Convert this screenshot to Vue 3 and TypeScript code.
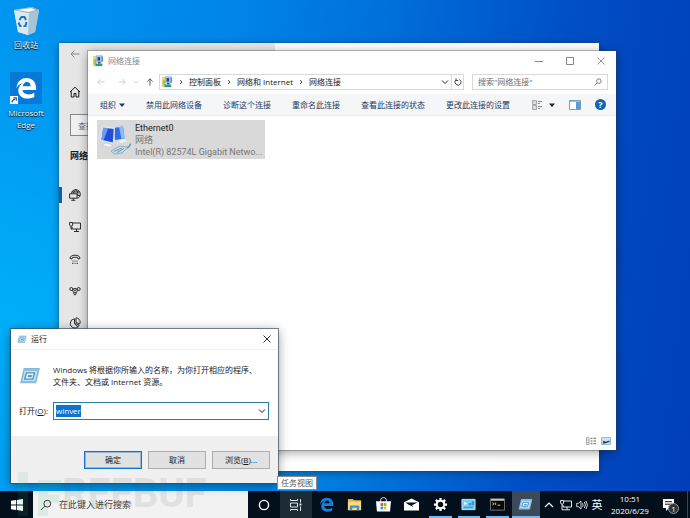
<script setup lang="ts">
import { onMounted, ref } from 'vue'

interface Command {
  label: string
  menu?: boolean
}

interface TaskApp {
  name: string
  icon: string
  running?: boolean
  active?: boolean
}

const commands: Command[] = [
  { label: '组织', menu: true },
  { label: '禁用此网络设备' },
  { label: '诊断这个连接' },
  { label: '重命名此连接' },
  { label: '查看此连接的状态' },
  { label: '更改此连接的设置' },
]

const crumbs: string[] = ['控制面板', '网络和 Internet', '网络连接']

const settingsPages: { name: string; icon: string }[] = [
  { name: '状态', icon: 'globe' },
  { name: '以太网', icon: 'ethernet' },
  { name: '拨号', icon: 'dialup' },
  { name: 'VPN', icon: 'vpn' },
  { name: '数据使用量', icon: 'usage' },
]

const apps: TaskApp[] = [
  { name: 'Microsoft Edge', icon: 'edge' },
  { name: '文件资源管理器', icon: 'folder' },
  { name: 'Microsoft Store', icon: 'store' },
  { name: '邮件', icon: 'mail' },
  { name: '设置', icon: 'gear', running: true },
  { name: '网络连接', icon: 'panel', running: true },
  { name: '命令提示符', icon: 'console', running: true },
  { name: '运行', icon: 'run', running: true, active: true },
]

const command = ref('winver')
const commandBox = ref<HTMLInputElement | null>(null)

onMounted(() => {
  commandBox.value?.focus()
  commandBox.value?.select()
})
</script>

<template>
  <svg class="defs" aria-hidden="true">
    <symbol id="i-run" viewBox="0 0 24 20">
      <path d="M5 1h18l-4 17H1z" fill="#8fc3e2" />
      <path d="M6 2h15.500l-3.500 14.500H2.500z" fill="#c4e2f3" stroke="#6ba6cb" stroke-width=".8" />
      <path d="M6 2h15.500l-.6 2.500H5.400z" fill="#8dbfdf" />
      <path d="M8 6.500h9l-1.800 7H6.200z" fill="#eef8fd" stroke="#4f93c2" stroke-width="1.600" />
      <path d="M10 9h4.500l-.6 2.400H9.400z" fill="#5d9cc4" />
    </symbol>
    <symbol id="i-net" viewBox="0 0 14 14">
      <path d="M1 1h4v12H1z" fill="#f0dc70" />
      <path d="M2 5h3v6H2z" fill="#9cc56a" />
      <path d="M5 1h7v7H5z" fill="#b9d3ee" stroke="#7f97b3" stroke-width=".8" />
      <path d="M6.500 2.500h3v4h-3z" fill="#173f9c" />
      <path d="M11 2h2v5l-2 1z" fill="#5e8fd0" />
      <path d="M7 8h3v2H7z" fill="#3a5475" />
      <path d="M4 10h8v3H4z" fill="#2c9d78" />
    </symbol>
    <symbol id="i-edge" viewBox="0 0 24 24">
      <path d="M1.500 12C2.500 4.500 7 1 12.500 1 19 1 23 5.600 23 12v2.300H8.200c.3 3.200 3 4.700 6.300 4.700 2.600 0 4.700-.7 6.500-1.800v4.700C19 23 16.500 23.500 13.500 23.500 7.500 23.500 3.600 20 3.600 14.700c0-3.500 1.900-6.400 5-8C5.500 7.200 3 9 1.500 12zM8.500 10h8.600c0-2.700-1.400-4.500-4-4.500-2.500 0-4.200 1.800-4.600 4.500z" />
    </symbol>
    <symbol id="i-search" viewBox="0 0 12 12">
      <circle cx="7.300" cy="4.700" r="3.400" fill="none" stroke="currentColor" />
      <path d="M4.800 7.200 1 11" stroke="currentColor" fill="none" />
    </symbol>
    <symbol id="i-back" viewBox="0 0 10 10">
      <path d="M9.500 5H1M4.500 1.500 1 5l3.500 3.500" fill="none" stroke="currentColor" />
    </symbol>
    <symbol id="i-down" viewBox="0 0 8 8">
      <path d="M1 2.500 4 5.500l3-3" fill="none" stroke="currentColor" />
    </symbol>
    <symbol id="i-close" viewBox="0 0 8 8">
      <path d="m.5.5 7 7m0-7-7 7" fill="none" stroke="currentColor" stroke-width=".9" />
    </symbol>
  </svg>

  <main class="desktop">
    <div class="shortcuts">
      <a class="shortcut" href="#recycle">
        <svg class="bin" viewBox="0 0 28 30">
          <path d="M2 4 20 1l7 3-4 22-7 3-10-3z" fill="#cfe0ea" />
          <path d="m2 4 15 3-1 22-10-3z" fill="#dbe8f0" />
          <path d="m17 7 10-3-4 22-7 3z" fill="#a9c3d3" />
          <path d="M2 4 20 1l7 3-10 3z" fill="#8ca6b5" />
          <path d="m5 4 14-2 5 2-7 2z" fill="#f4f8fa" />
          <path d="m7.500 14 2-3h3l1.500 3M14.500 16l-1 4h-2M9.500 20H8l-1.500-3.500" fill="none" stroke="#1c78c0" stroke-width="2" />
        </svg>
        <span>回收站</span>
      </a>
      <a class="shortcut" href="#edge">
        <span class="tile">
          <svg class="tile-logo"><use href="#i-edge" /></svg>
          <svg class="arrow" viewBox="0 0 8 8">
            <path d="M0 0h8v8H0z" fill="#fff" />
            <path d="M2 6.500C2 4.500 3 3.500 5 3.300M3.300 1.800h3v3" fill="none" stroke="#1b5fa8" stroke-width="1.200" />
          </svg>
        </span>
        <span>Microsoft<br />Edge</span>
      </a>
    </div>

    <section class="settings" aria-label="设置">
      <nav class="side">
        <button class="side-back" aria-label="返回"><svg class="s10"><use href="#i-back" /></svg></button>
        <button class="side-home" aria-label="主页">
          <svg class="s12" viewBox="0 0 12 12"><path d="M1 6 6 1.200 11 6M2.200 5v6H5V7.500h2V11h2.800V5" fill="none" stroke="currentColor" /></svg>
        </button>
        <input class="side-find" type="text" placeholder="查找设置" aria-label="查找设置" />
        <h2>网络和 Internet</h2>
        <button v-for="(page, i) in settingsPages" :key="page.icon" class="side-item" :class="{ on: i === 0 }" :aria-label="page.name">
          <svg class="s12" viewBox="0 0 12 12" fill="none" stroke="currentColor" stroke-width=".9">
            <template v-if="page.icon === 'globe'">
              <path d="M2.500 4.500C2.500 2.300 4.500.7 6.800.7c2.500 0 4.500 2 4.500 4.500 0 2-1.200 3.600-3 4.200M6.800.7C5.300 1.800 4.800 3 4.800 4.500M6.800.7c1.600 1.300 2.200 2.900 2 5.500M3 3h7.600M8.500 6.500h2.600" />
              <path d="M.6 4.800h7.400v4.400H.6zM4.300 9.200v2M2.300 11.300h4" />
            </template>
            <template v-else-if="page.icon === 'ethernet'">
              <path d="M4 2h7.500v6H3V5.500M7.500 8v2.500M5 10.500h5M.6 1.500h3v2.500l-1 1.200h-1l-1-1.200zM2 5.200V8h1" />
            </template>
            <template v-else-if="page.icon === 'dialup'">
              <path d="M1 5.500C1 3.300 3 2.200 6 2.200s5 1.100 5 3.300L9 6 8.300 4.300H3.700L3 6zM3.500 8h1m1 0h1m1 0h1M3 10.300h1.500m1 0h1m1 0H9" />
            </template>
            <template v-else-if="page.icon === 'vpn'">
              <circle cx="2.300" cy="4" r="1.500" /><circle cx="9.700" cy="4" r="1.500" /><circle cx="6" cy="4.600" r="1.200" />
              <path d="M3.200 5.200 5 8m3.800-2.800L7 8M3.800 4h1m2.400 0h1" /><circle cx="6" cy="8.700" r="1.200" />
            </template>
            <template v-else>
              <path d="M5.500 1.800A4.600 4.600 0 1 0 10.200 8L5.500 6.500zM7 .8c2.500.2 4.200 2 4.200 4.500 0 .6-.1 1-.3 1.500L7 5.500zM5.500 6.500 9 10.200" />
            </template>
          </svg>
        </button>
      </nav>
    </section>

    <section class="explorer" aria-label="网络连接">
      <header class="titlebar">
        <svg class="s12"><use href="#i-net" /></svg>
        <span class="title">网络连接</span>
        <button class="win-btn" aria-label="最小化"><svg class="s8" viewBox="0 0 8 8"><path d="M0 4.500h8" stroke="currentColor" /></svg></button>
        <button class="win-btn" aria-label="最大化"><svg class="s8" viewBox="0 0 8 8"><path d="M.5.5h7v7h-7z" fill="none" stroke="currentColor" /></svg></button>
        <button class="win-btn" aria-label="关闭"><svg class="s8"><use href="#i-close" /></svg></button>
      </header>

      <div class="navrow">
        <button class="nav-btn dim" aria-label="后退"><svg class="s8"><use href="#i-back" /></svg></button>
        <button class="nav-btn dim" aria-label="前进"><svg class="s8 flip"><use href="#i-back" /></svg></button>
        <button class="nav-more dim" aria-label="最近位置"><svg class="s6"><use href="#i-down" /></svg></button>
        <button class="nav-btn up" aria-label="上移"><svg class="s8 turn"><use href="#i-back" /></svg></button>
        <nav class="address">
          <svg class="s12"><use href="#i-net" /></svg>
          <template v-for="crumb in crumbs" :key="crumb">
            <svg class="sep" viewBox="0 0 6 6"><path d="m2 1 2 2-2 2" fill="none" stroke="#444" /></svg>
            <a href="#path">{{ crumb }}</a>
          </template>
          <button class="drop" aria-label="以前的位置"><svg class="s8"><use href="#i-down" /></svg></button>
          <button class="refresh" aria-label="刷新">
            <svg class="s8" viewBox="0 0 8 8"><path d="M5.500 1.500A3 3 0 1 1 2 1.900M2 .3v2.200h2.200" fill="none" stroke="#444" /></svg>
          </button>
        </nav>
        <label class="find">
          <input type="text" placeholder="搜索&quot;网络连接&quot;" aria-label="搜索网络连接" />
          <svg class="s8"><use href="#i-search" /></svg>
        </label>
      </div>

      <div class="commands">
        <button v-for="c in commands" :key="c.label" class="cmd">
          {{ c.label }}<svg v-if="c.menu" class="tri" viewBox="0 0 6 4"><path d="M0 .5h6L3 4z" fill="#1d3a63" /></svg>
        </button>
        <span class="tools">
          <button class="cmd" aria-label="更改视图">
            <svg class="s10" viewBox="0 0 10 10">
              <path d="M.5.5h4v4h-4zM.5 5.500h4v4h-4z" fill="#dcdcdc" stroke="#a6a6a6" />
              <path d="M6 1.500h4M6 3.500h2M6 6.500h4M6 8.500h2" stroke="#7d8791" />
            </svg>
          </button>
          <button class="cmd" aria-label="更多视图"><svg class="tri" viewBox="0 0 6 4"><path d="M0 .5h6L3 4z" fill="#222" /></svg></button>
          <button class="cmd pane" aria-label="预览窗格">
            <svg class="s11" viewBox="0 0 12 10"><path d="M.5.5h11v9H.5z" fill="#fff" stroke="#7a9cba" /><path d="M7 1h4v8H7z" fill="#5b9bd8" /><path d="M1 1.500h10" stroke="#a9bfd3" /></svg>
          </button>
          <button class="help" aria-label="帮助">?</button>
        </span>
      </div>

      <div class="files">
        <article class="adapter">
          <svg class="adapter-icon" viewBox="0 0 32 34">
            <path d="m14 4 11-2 2 15-11 2z" fill="#c9d8e8" />
            <path d="m15 5 9-1.500 1.500 12L16 17z" fill="#2d6fe0" />
            <path d="m20 4 4-.6 1.500 12-3 .5z" fill="#8fb8f5" />
            <path d="m3 3 13 1.500-1 17L1 18z" fill="#dbe5ef" />
            <path d="m4.200 4.700 10.500 1.200-.9 13.500L2.500 16.800z" fill="#1f4fd6" />
            <path d="m4.200 4.700 5 .6L4.500 17.300l-2-.5z" fill="#6b9cf3" />
            <path d="m6 20-3 2.500 8 2 3-2-4-2z" fill="#eef2f5" stroke="#b6c0c9" stroke-width=".6" />
            <path d="m19 18 3 2 6-2-3-2z" fill="#eef2f5" />
            <path d="m12 28 9-5 8 1-6 6-8 1z" fill="#c3dae7" stroke="#7fa5bb" stroke-width=".8" />
            <path d="m15 28.500 8-3.500M18 29.500l7-4" stroke="#5f89a4" stroke-width=".8" />
            <path d="M28 25c3-.5 2-3 4-4" fill="none" stroke="#5b93b8" stroke-width="1.400" />
          </svg>
          <div class="adapter-text">
            <strong>Ethernet0</strong>
            <span>网络</span>
            <span>Intel(R) 82574L Gigabit Netwo...</span>
          </div>
        </article>
      </div>

      <footer class="status">
        <button class="cmd" aria-label="详细信息">
          <svg class="s10" viewBox="0 0 10 8"><path d="M.5.5h2.500v7H.5zM.5 3h2.500M.5 5.500h2.500" fill="none" stroke="#8a8a8a" stroke-width=".7" /><path d="M4.500 1.300h2m1 0h2.500M4.500 4h2m1 0h2.500M4.500 6.700h2m1 0h2.500" stroke="#666" /></svg>
        </button>
        <button class="cmd" aria-label="大图标">
          <svg class="s10" viewBox="0 0 10 8"><path d="M.5.5h9v7h-9z" fill="#cfe3f0" stroke="#9cbacd" /><path d="m1.500 6.500 1-3 2 1.200L8.500 3.500v1.500L4 6.500z" fill="#24465c" /></svg>
        </button>
      </footer>
    </section>

    <form class="run" aria-label="运行" @submit.prevent>
      <header class="run-title">
        <svg class="run-small"><use href="#i-run" /></svg>
        <span class="title">运行</span>
        <button type="button" class="run-close" aria-label="关闭"><svg class="s8"><use href="#i-close" /></svg></button>
      </header>
      <div class="run-body">
        <svg class="run-large"><use href="#i-run" /></svg>
        <p>Windows 将根据你所输入的名称，为你打开相应的程序、文件夹、文档或 Internet 资源。</p>
        <label for="cmd">打开(<u>O</u>):</label>
        <div class="combo">
          <input id="cmd" ref="commandBox" v-model="command" type="text" spellcheck="false" autocomplete="off" />
          <button type="button" aria-label="历史记录"><svg class="s8"><use href="#i-down" /></svg></button>
        </div>
      </div>
      <footer class="run-foot">
        <button type="submit" class="primary">确定</button>
        <button type="button">取消</button>
        <button type="button">浏览(<u>B</u>)...</button>
      </footer>
    </form>

    <div class="tooltip" role="tooltip">任务视图</div>

    <footer class="taskbar">
      <button class="start" aria-label="开始">
        <svg class="s12" viewBox="0 0 12 12"><path d="M0 1.700 5 1v4.600H0zM5.800.9 12 0v5.600H5.800zM0 6.400h5V11l-5-.7zM5.800 6.400H12V12l-6.200-.9z" fill="#fff" /></svg>
      </button>
      <label class="search">
        <svg class="s12"><use href="#i-search" /></svg>
        <input type="text" placeholder="在此键入进行搜索" aria-label="在此键入进行搜索" />
      </label>
      <button class="task" aria-label="Cortana"><svg class="s12" viewBox="0 0 12 12"><circle cx="6" cy="6" r="4.600" fill="none" stroke="#fff" stroke-width="1.400" /></svg></button>
      <button class="task hover" aria-label="任务视图">
        <svg class="s12" viewBox="0 0 12 12"><path d="M.5 0v1.500h7V0M.5 4h7v4h-7zM.5 12v-1.500h7V12M10.500 0v3.500M10.500 7.500V12" fill="none" stroke="#dfe6e8" /><path d="M9.500 4.500h2v2h-2z" fill="#dfe6e8" /></svg>
      </button>
      <div class="apps">
        <button v-for="app in apps" :key="app.icon" class="app" :class="{ running: app.running, active: app.active }" :aria-label="app.name">
          <svg v-if="app.icon === 'edge'" class="app-icon blue"><use href="#i-edge" /></svg>
          <svg v-else-if="app.icon === 'run'" class="app-icon"><use href="#i-run" /></svg>
          <svg v-else class="app-icon" viewBox="0 0 16 16">
            <template v-if="app.icon === 'folder'">
              <path d="M1 2h5l1.500 1.500H15V14H1z" fill="#e9b93f" /><path d="M1 5h14v9H1z" fill="#fbdc7c" />
              <path d="M3 9h10v5h-2.500v-2.500h-5V14H3z" fill="#3d93d6" />
            </template>
            <template v-else-if="app.icon === 'store'">
              <path d="M5 5V3.500C5 1.500 6.200.7 8 .7s3 .8 3 2.800V5" fill="none" stroke="#fff" /><path d="M0 4.500h16l-1 11H1z" fill="#fff" />
              <path d="M4.800 6.500h2.800v3H4.800z" fill="#e8502a" /><path d="M8.300 6.500h2.800v3H8.300z" fill="#7dba2c" /><path d="M4.800 10.200h2.800v3H4.800z" fill="#2b9de0" /><path d="M8.300 10.200h2.800v3H8.300z" fill="#f6b824" />
            </template>
            <template v-else-if="app.icon === 'mail'">
              <path d="M0 5.500 8 1.500l8 4v9H0z" fill="#fff" /><path d="M1.500 5.800h13L8.500 8.700 10.500 11 4.500 8z" fill="#04121c" />
            </template>
            <template v-else-if="app.icon === 'gear'">
              <circle cx="8" cy="8" r="4" fill="none" stroke="#fff" stroke-width="2.200" />
              <path d="M8 1v2.500M8 12.500V15M1 8h2.500M12.500 8H15M3.050 3.050l1.800 1.800M11.150 11.150l1.800 1.800M3.050 12.950l1.800-1.800M11.150 4.850l1.800-1.800" stroke="#fff" stroke-width="2.400" />
            </template>
            <template v-else-if="app.icon === 'panel'">
              <path d="M1 2.500h14v11H1z" fill="#78cdf3" stroke="#b9e6fa" /><path d="m3 5 4 2-2 .5-1 1.500z" fill="#fff" /><path d="M9 9V7h1.500v2M12 9V5h1.500v4M3 11h10" fill="none" stroke="#1477b8" stroke-width=".8" />
            </template>
            <template v-else>
              <path d="M.5 2h15v12H.5z" fill="#080808" stroke="#777" /><path d="M1 2h14v2H1z" fill="#c6c6c6" /><path d="m2.500 6 2 1.300-2 1.300M6 6v2.500M8 8.700h3" fill="none" stroke="#ddd" stroke-width=".9" />
            </template>
          </svg>
        </button>
      </div>
      <div class="tray">
        <button aria-label="显示隐藏的图标"><svg class="s10" viewBox="0 0 10 10"><path d="m1 7 4-4 4 4" fill="none" stroke="#fff" stroke-width="1.200" /></svg></button>
        <button aria-label="网络">
          <svg class="s12" viewBox="0 0 12 12"><path d="M4 2h7.500v6H3V6M7 8v2.500M4.500 10.800H10M.6 1.500h3v2.500l-1 1.200h-1l-1-1.200zM2 5.200v5.600h2.500" fill="none" stroke="#fff" stroke-width=".9" /></svg>
        </button>
        <button aria-label="音量">
          <svg class="s12" viewBox="0 0 12 12"><path d="M.7 4.300h1.800L5 2v8L2.500 7.700H.7z M6.500 4.200q1.300 1.800 0 3.600M8.300 3q2.200 3 0 6M10 2q2.800 4 0 8" fill="none" stroke="#fff" stroke-width=".8" /></svg>
        </button>
        <button class="ime">英</button>
        <button class="clock"><time>10:51</time><time>2020/6/29</time></button>
        <button class="notice" aria-label="通知">
          <svg viewBox="0 0 14 14"><path d="M1 1h11v9H7l-3 3v-3H1z" fill="#fff" /><path d="M3 3.700h7M3 6.200h7" stroke="#04121c" /></svg>
          <span class="badge">1</span>
        </button>
      </div>
    </footer>

    <div class="mark" aria-hidden="true">
      <svg viewBox="0 0 44 44"><path d="M0 0h10v44H0zM20 8h23v8H30v7h11v8H30v13H20z" fill="#35b779" /></svg>
      <span>REEBUF</span>
    </div>
  </main>
</template>

<style>
body {
  margin: 0;
  overflow: hidden;
}
</style>

<style scoped>
.defs {
  position: absolute;
  width: 0;
  height: 0;
}

.desktop {
  position: relative;
  height: 100vh;
  overflow: hidden;
  display: flex;
  flex-direction: column;
  justify-content: space-between;
  font: 8px/12px "Open Sans", "Noto Sans CJK SC", sans-serif;
  color: #1a1a1a;
  background:
    radial-gradient(ellipse at 0 62%, rgba(0, 184, 255, 0.75), rgba(0, 150, 245, 0) 65%),
    linear-gradient(97deg, #0096f0 0%, #0086e8 30%, #006fda 52%, #004fc6 76%, #003eb8 100%);
}

button,
input {
  font: inherit;
  color: inherit;
  margin: 0;
  padding: 0;
  border: 0;
  background: none;
  outline: none;
  min-width: 0;
}

button {
  display: flex;
  align-items: center;
  justify-content: center;
}

a {
  color: inherit;
  text-decoration: none;
}

svg {
  display: block;
  flex: none;
}

.s6 { width: 6px; height: 6px; }
.s8 { width: 8px; height: 8px; }
.s10 { width: 10px; height: 10px; }
.s11 { width: 12px; height: 10px; }
.s12 { width: 12px; height: 12px; }
.flip { transform: scaleX(-1); }
.turn { transform: rotate(90deg); }

/* Desktop shortcuts */
.shortcuts {
  display: flex;
  flex-direction: column;
  align-items: flex-start;
  gap: 21px;
  padding-top: 6px;
}

.shortcut {
  display: flex;
  flex-direction: column;
  align-items: center;
  width: 52px;
  gap: 3px;
  color: #fff;
  text-align: center;
  text-shadow: 0 1px 1px #000, 0 0 2px #002a50;
}

.bin {
  width: 28px;
  height: 30px;
}

.tile {
  position: relative;
  display: flex;
  align-items: center;
  justify-content: center;
  width: 32px;
  height: 32px;
  background: #0878d8;
}

.tile-logo {
  width: 22px;
  height: 22px;
  fill: #fff;
}

.arrow {
  position: absolute;
  left: 0;
  bottom: 0;
  width: 8px;
  height: 8px;
}

/* Settings window */
.settings {
  position: absolute;
  left: 59px;
  top: 43px;
  width: 540px;
  height: 428px;
  background: #fff;
  box-shadow: 0 0 0 1px rgba(40, 60, 80, 0.2), 0 2px 8px rgba(0, 0, 0, 0.35);
}

.side {
  display: flex;
  flex-direction: column;
  align-items: flex-start;
  width: 40%;
  height: 100%;
  background: #e6e6e6;
}

.side button {
  height: 32px;
  padding-left: 10px;
}

.side .side-back {
  height: 22px;
  padding-left: 11px;
  color: #888;
}

.side .side-home {
  height: 49px;
  padding-top: 5px;
}

.side-find {
  width: 190px;
  height: 20px;
  margin-left: 11px;
  padding-left: 7px;
  border: 1px solid #888;
  background: #f0f0f0;
}

.side h2 {
  margin: 14px 0 25px 11px;
  font-size: 9px;
  line-height: 12px;
}

.side .side-item {
  border-left: 3px solid transparent;
  padding-left: 7px;
  height: 16px;
  margin-bottom: 16px;
}

.side .side-item.on {
  border-left-color: #0a63b0;
}

/* Network connections window */
.explorer {
  position: absolute;
  left: 88px;
  top: 51px;
  width: 528px;
  height: 399px;
  display: flex;
  flex-direction: column;
  background: #fff;
  box-shadow: 0 0 0 1px rgba(60, 60, 60, 0.3), 0 2px 10px rgba(0, 0, 0, 0.4);
}

.titlebar {
  display: flex;
  align-items: center;
  height: 19px;
  padding-left: 4px;
  color: #888;
}

.title {
  flex: 1;
  padding-left: 4px;
}

.win-btn {
  width: 31px;
  height: 19px;
}

.navrow {
  display: flex;
  align-items: center;
  height: 24px;
  padding: 0 8px 0 2px;
  color: #333;
}

.nav-btn {
  width: 21px;
  height: 16px;
}

.nav-btn.up {
  width: 19px;
}

.nav-more {
  width: 8px;
}

.navrow .dim {
  color: #c4c4c4;
}

.address,
.find {
  display: flex;
  align-items: center;
  box-sizing: border-box;
  height: 16px;
  border: 1px solid #d9d9d9;
}

.address {
  flex: 1;
  padding-left: 1px;
  color: #222;
}

.sep {
  width: 6px;
  height: 6px;
  margin: 0 5px;
}

.drop {
  margin-left: auto;
  width: 12px;
  height: 14px;
}

.refresh {
  width: 12px;
  height: 14px;
  border-left: 1px solid #d9d9d9;
}

.find {
  width: 136px;
  margin-left: 8px;
  padding: 0 5px;
  color: #444;
}

.find input {
  flex: 1;
}

input::placeholder {
  color: #6d6d6d;
  opacity: 1;
}

.commands {
  display: flex;
  align-items: center;
  gap: 21px;
  height: 21px;
  padding: 0 10px 0 12px;
  background: #f5f6f7;
  border-bottom: 1px solid #ececee;
  color: #1d3a63;
}

.cmd {
  white-space: nowrap;
}

.tri {
  width: 6px;
  height: 4px;
  margin-left: 3px;
}

.tools {
  display: flex;
  align-items: center;
  margin-left: auto;
  gap: 4px;
}

.tools .pane {
  margin: 0 10px;
}

.help {
  width: 11px;
  height: 11px;
  border-radius: 50%;
  background: #0f63b0;
  color: #fff;
  font-size: 9px;
  font-weight: 700;
}

.files {
  flex: 1;
  padding: 4px 9px;
}

.adapter {
  display: flex;
  align-items: center;
  gap: 4px;
  width: 168px;
  height: 39px;
  box-sizing: border-box;
  padding-left: 2px;
  background: #d9d9d9;
}

.adapter-icon {
  width: 32px;
  height: 34px;
}

.adapter-text {
  display: flex;
  flex-direction: column;
  color: #777;
  font-family: Roboto, "Noto Sans CJK SC", sans-serif;
  font-size: 9px;
  white-space: nowrap;
}

.adapter-text strong {
  color: #1a1a1a;
  font-weight: 400;
}

.status {
  display: flex;
  justify-content: flex-end;
  gap: 5px;
  padding: 0 5px 4px;
}

/* Run dialog */
.run {
  position: absolute;
  left: 11px;
  top: 329px;
  width: 267px;
  height: 154px;
  display: flex;
  flex-direction: column;
  background: #fff;
  box-shadow: 0 0 0 1px rgba(60, 70, 80, 0.65), 0 2px 10px rgba(0, 0, 0, 0.45);
}

.run-title {
  display: flex;
  align-items: center;
  height: 20px;
  padding-left: 6px;
  border-bottom: 1px solid #f1f1f1;
}

.run-small {
  width: 10px;
  height: 9px;
}

.run-close {
  width: 22px;
  height: 20px;
}

.run-body {
  flex: 1;
  display: grid;
  grid-template-columns: 30px 1fr;
  align-content: start;
  align-items: center;
  column-gap: 4px;
  row-gap: 14px;
  padding: 14px 9px 0 8px;
}

.run-body label {
  white-space: nowrap;
}

.run-body p {
  margin: 0;
  padding-right: 6px;
}

.run-large {
  width: 22px;
  height: 18px;
}

.combo {
  display: flex;
  align-items: center;
  box-sizing: border-box;
  height: 18px;
  padding-left: 2px;
  border: 1px solid #2d7d9a;
}

.combo input {
  flex: 1;
}

.combo input::selection {
  background: #0a74d0;
  color: #fff;
}

.combo button {
  width: 13px;
}

.run-foot {
  display: flex;
  justify-content: flex-end;
  gap: 6px;
  padding: 15px 8px 14px;
  background: #f0f0f0;
}

.run-foot button {
  box-sizing: border-box;
  width: 58px;
  height: 18px;
  border: 1px solid #adadad;
  background: #e1e1e1;
}

.run-foot .primary {
  border: 1px solid #0a74d0;
  box-shadow: inset 0 0 0 1px rgba(10, 116, 208, 0.35);
}

.tooltip {
  position: absolute;
  left: 277px;
  bottom: 28px;
  padding: 0 3px;
  border: 1px solid #8a8a8a;
  background: #fff;
  color: #555;
}

/* Taskbar */
.taskbar {
  display: flex;
  height: 27px;
  background: #03101c;
  color: #fff;
}

.taskbar button {
  height: 27px;
}

.start {
  width: 33px;
}

.search {
  display: flex;
  align-items: center;
  gap: 7px;
  width: 208px;
  padding-left: 7px;
  background: #f2f2f2;
  color: #333;
  font-size: 9px;
}

.search input {
  flex: 1;
}

.search input::placeholder {
  color: #444;
}

.task {
  width: 32px;
}

.hover {
  background: #1d2b35;
}

.apps {
  flex: 1;
  display: grid;
  grid-template-columns: repeat(8, 1fr);
}

.app-icon {
  width: 15px;
  height: 15px;
}

.blue {
  fill: #1481e0;
}

.app.running {
  margin: 0 3px;
  box-shadow: inset 0 -2px #76b9ed;
}

.app.active {
  margin: 0;
  background: #3a4a58;
}

.tray {
  display: grid;
  grid-template-columns: 18px 16px 15px 16px 50px 35px;
}

.tray .ime {
  font-size: 11px;
}

.tray .clock {
  flex-direction: column;
}

.notice {
  position: relative;
  justify-content: flex-start;
  margin-right: 2px;
  padding-left: 7px;
  border-right: 1px solid #3c4650;
}

.notice svg {
  width: 14px;
  height: 14px;
}

.badge {
  position: absolute;
  left: 13px;
  top: 12px;
  width: 9px;
  height: 9px;
  border: 1px solid #999;
  border-radius: 50%;
  background: #2a343d;
  font-size: 8px;
  line-height: 9px;
  text-align: center;
}

/* Translucent mark over the lower left corner */
.mark {
  position: absolute;
  left: 18px;
  bottom: 0;
  display: flex;
  align-items: center;
  pointer-events: none;
  color: #555;
  font-family: Roboto, sans-serif;
  font-size: 40px;
  font-weight: 700;
  line-height: 48px;
  opacity: 0.1;
}

.mark svg {
  width: 44px;
  height: 44px;
}
</style>
